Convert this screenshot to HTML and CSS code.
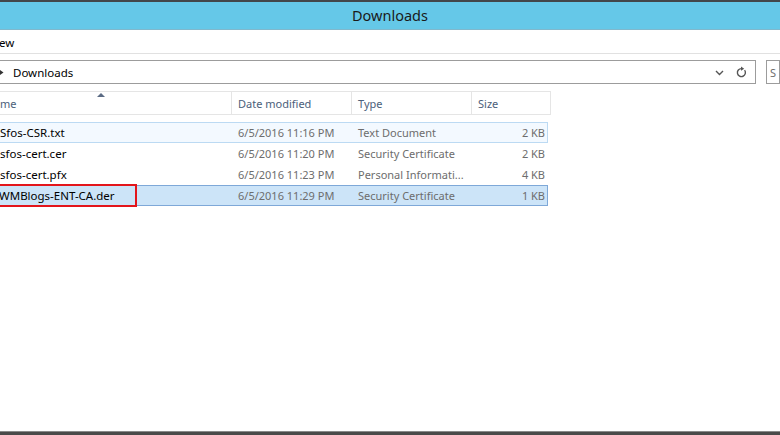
FILE: index.html
```html
<!DOCTYPE html>
<html>
<head>
<meta charset="utf-8">
<link rel="stylesheet" href="styles.css">
</head>
<body>
<div class="window">
  <div class="top-edge"></div>
  <div class="titlebar">Downloads</div>
  <div class="menu"><span class="menu-item">ew</span></div>
  <div class="address-row">
    <div class="address">
      <svg class="crumb-arrow" width="5" height="7" viewBox="0 0 5 7"><path d="M0 1 L3.5 3.5 L0 6 Z" fill="#333"/></svg>
      <span class="crumb">Downloads</span>
      <span class="addr-spacer"></span>
      <svg class="chev" width="9" height="6" viewBox="0 0 9 6"><path d="M1 1 L4.5 4.5 L8 1" fill="none" stroke="#555" stroke-width="1.4"/></svg>
      <svg class="refresh" width="11" height="12" viewBox="0 0 11 12"><path d="M8.6 4.2 A4 4 0 1 1 5.5 2.6" fill="none" stroke="#555" stroke-width="1.4"/><path d="M5 0.4 L8.2 2.7 L5 4.8 Z" fill="#555"/></svg>
    </div>
    <div class="search"><span class="search-text">S</span></div>
  </div>
  <div class="list">
    <div class="header">
      <div class="hcell hname">me<svg class="sort" width="8" height="4" viewBox="0 0 8 4"><path d="M0 4 L4 0 L8 4 Z" fill="#5b6b84"/></svg></div>
      <div class="hcell">Date modified</div>
      <div class="hcell">Type</div>
      <div class="hcell">Size</div>
    </div>
    <div class="rows">
      <div class="row hover">
        <div class="c name">Sfos-CSR.txt</div>
        <div class="c meta">6/5/2016 11:16 PM</div>
        <div class="c meta">Text Document</div>
        <div class="c meta size">2 KB</div>
      </div>
      <div class="row">
        <div class="c name">sfos-cert.cer</div>
        <div class="c meta">6/5/2016 11:20 PM</div>
        <div class="c meta">Security Certificate</div>
        <div class="c meta size">2 KB</div>
      </div>
      <div class="row">
        <div class="c name">sfos-cert.pfx</div>
        <div class="c meta">6/5/2016 11:23 PM</div>
        <div class="c meta">Personal Informati...</div>
        <div class="c meta size">4 KB</div>
      </div>
      <div class="row selected">
        <div class="c name cut">WMBlogs-ENT-CA.der</div>
        <div class="c meta">6/5/2016 11:29 PM</div>
        <div class="c meta">Security Certificate</div>
        <div class="c meta size">1 KB</div>
        <span class="redbox"></span>
      </div>
    </div>
  </div>
  <div class="fill"></div>
  <div class="bottom-edge"></div>
</div>
</body>
</html>
```
FILE: styles.css
```css
html, body {
  margin: 0;
  padding: 0;
  background: #ffffff;
}
body {
  font-family: "Noto Sans", "DejaVu Sans", sans-serif;
  font-size: 11px;
  color: #000;
  overflow: hidden;
}
.window {
  width: 780px;
  height: 435px;
  display: flex;
  flex-direction: column;
  overflow: hidden;
}
.top-edge {
  height: 2px;
  background: #43474a;
  flex: none;
}
.titlebar {
  height: 28px;
  box-sizing: border-box;
  background: #65c8e8;
  border-bottom: 1px solid #80b8cc;
  display: flex;
  align-items: center;
  justify-content: center;
  font-size: 14.5px;
  color: #1a1a1a;
  flex: none;
  padding-bottom: 1px;
}
.menu {
  height: 23px;
  border-bottom: 1px solid #e1e1e1;
  display: flex;
  align-items: center;
  flex: none;
  font-size: 11.5px;
}
.menu-item {
  margin-left: -1px;
  padding-top: 1px;
}
.address-row {
  display: flex;
  margin-top: 6px;
  height: 24px;
  flex: none;
}
.address {
  width: 758px;
  margin-left: -2px;
  box-sizing: border-box;
  border: 1px solid #9c9c9c;
  display: flex;
  align-items: center;
  font-size: 11.5px;
}
.crumb-arrow {
  margin-left: 1px;
}
.crumb {
  margin-left: 8px;
}
.addr-spacer {
  flex: 1;
}
.chev {
  margin-right: 12px;
  margin-top: 1px;
}
.refresh {
  margin-right: 8px;
}
.search {
  margin-left: 10px;
  flex: 1;
  box-sizing: border-box;
  border: 1px solid #9c9c9c;
  display: flex;
  align-items: center;
  color: #6d6d6d;
}
.search-text {
  margin-left: 3px;
}
.list {
  margin-top: 7px;
  flex: none;
}
.header {
  display: grid;
  grid-template-columns: 232px 120px 120px 79px;
  width: 551px;
  height: 24px;
  box-sizing: border-box;
  border-top: 1px solid #e5e5e5;
  border-bottom: 1px solid #e5e5e5;
}
.hcell {
  border-right: 1px solid #e5e5e5;
  color: #4c607a;
  display: flex;
  align-items: center;
  padding-left: 6px;
  padding-top: 1px;
}
.hname {
  padding-left: 0;
  position: relative;
}
.sort {
  position: absolute;
  left: 97px;
  top: 1px;
}
.rows {
  margin-top: 7px;
  width: 548px;
}
.row {
  position: relative;
  display: grid;
  grid-template-columns: 232px 120px 120px 76px;
  height: 21px;
  box-sizing: border-box;
  border: 1px solid transparent;
  border-left: none;
  align-items: center;
}
.row.hover {
  background: #f3f9ff;
  border-color: #bcdaf3;
}
.row.selected {
  background: #cce4f8;
  border-color: #7ea8d8;
}
.c {
  white-space: nowrap;
}
.name {
  margin-left: 0;
  font-size: 11.5px;
}
.name.cut {
  margin-left: -1px;
}
.meta {
  color: #6d6d6d;
  padding-left: 6px;
}
.size {
  text-align: right;
  padding-right: 3px;
}
.redbox {
  position: absolute;
  left: -4px;
  top: -2px;
  width: 141px;
  height: 23px;
  border: 2px solid #e3151b;
  box-sizing: border-box;
}
.fill {
  flex: 1;
}
.bottom-edge {
  height: 3px;
  background: #4a4a4a;
  border-top: 1px solid #8a8a8a;
  flex: none;
}
```
